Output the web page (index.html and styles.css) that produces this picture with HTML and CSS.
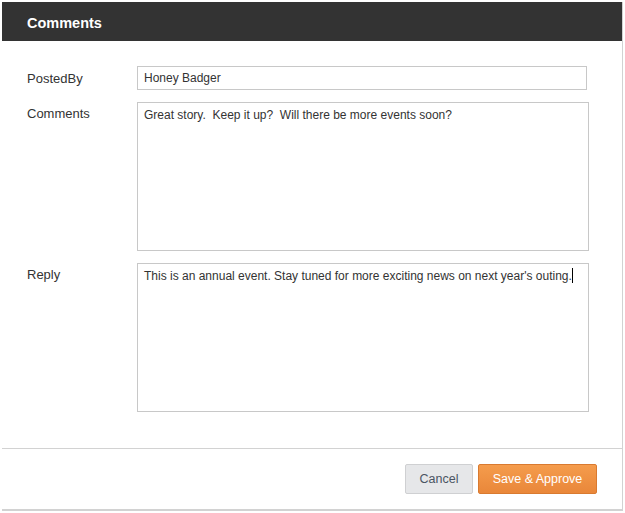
FILE: index.html
```html
<!DOCTYPE html>
<html>
<head>
<meta charset="utf-8">
<link rel="stylesheet" href="styles.css">
</head>
<body>
<div class="dialog">
  <div class="header">Comments</div>
  <div class="body">
    <div class="row">
      <label class="label">PostedBy</label>
      <div class="field input">Honey Badger</div>
    </div>
    <div class="row">
      <label class="label">Comments</label>
      <div class="field area">Great story.&nbsp; Keep it up?&nbsp; Will there be more events soon?</div>
    </div>
    <div class="row">
      <label class="label">Reply</label>
      <div class="field area">This is an annual event. Stay tuned for more exciting news on next year's outing.<span class="caret"></span></div>
    </div>
  </div>
  <div class="footer">
    <button class="btn btn-cancel">Cancel</button>
    <button class="btn btn-primary">Save &amp; Approve</button>
  </div>
</div>
</body>
</html>
```

FILE: styles.css
```css
html, body {
  margin: 0;
  padding: 0;
  background: #ffffff;
}
body {
  font-family: "Liberation Sans", Arial, sans-serif;
  color: #333333;
}
.dialog {
  margin: 2px 0 0 2px;
  width: 620px;
  height: 507px;
  border-right: 1px solid #d2d2d2;
  border-bottom: 2px solid #d2d2d2;
  background: #ffffff;
  display: flex;
  flex-direction: column;
}
.header {
  height: 39px;
  box-sizing: border-box;
  padding: 3px 0 0 25px;
  display: flex;
  align-items: center;
  background: #333333;
  color: #ffffff;
  font-weight: bold;
  font-size: 14.5px;
}
.body {
  padding: 25px 0 0 25px;
  display: flex;
  flex-direction: column;
  gap: 12px;
  flex: 1;
}
.row {
  display: flex;
  align-items: flex-start;
}
.label {
  width: 110px;
  font-size: 13px;
  line-height: 15px;
  padding-top: 4px;
  color: #333333;
}
.row:first-child .label {
  padding-top: 5px;
}
.field {
  border: 1px solid #c8c8c8;
  font-size: 12px;
  color: #333333;
  box-sizing: border-box;
  white-space: pre-wrap;
}
.input {
  width: 450px;
  height: 24px;
  padding: 4px 6px;
}
.area {
  width: 452px;
  height: 149px;
  padding: 5px 6px;
}
.row + .row + .row .area {
  padding-top: 4px;
}
.caret {
  display: inline-block;
  width: 1px;
  height: 15px;
  background: #000;
  vertical-align: -3px;
}
.footer {
  border-top: 1px solid #d2d2d2;
  height: 61px;
  box-sizing: border-box;
  display: flex;
  justify-content: flex-end;
  align-items: center;
  gap: 5px;
  padding-right: 25px;
}
.btn {
  font-family: "Liberation Sans", Arial, sans-serif;
  font-size: 12.5px;
  height: 30px;
  border-radius: 2px;
  cursor: pointer;
}
.btn-cancel {
  background: #e6e7e9;
  border: 1px solid #cfd0d2;
  color: #4b5563;
  width: 68px;
  padding: 0;
}
.btn-primary {
  background: linear-gradient(#f59c4c, #e9873a);
  border: 1px solid #d97a30;
  color: #ffffff;
  width: 119px;
  padding: 0;
}
```
